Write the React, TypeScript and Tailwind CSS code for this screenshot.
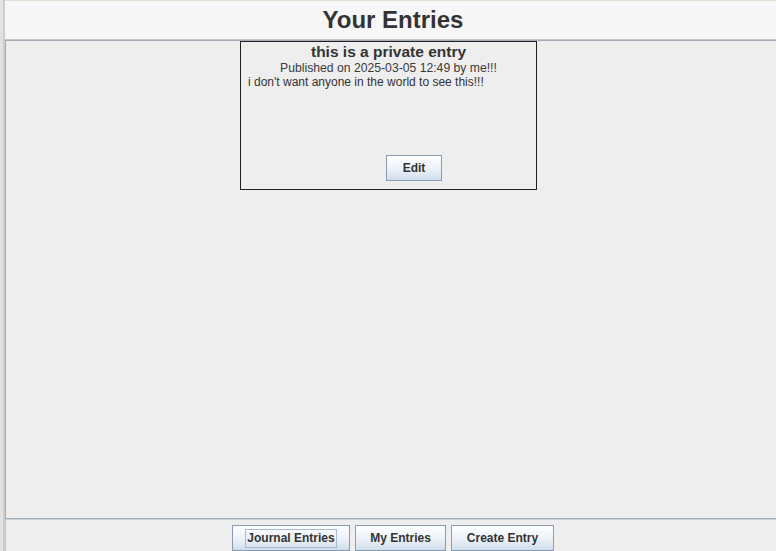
const font = { fontFamily: '"Liberation Sans", Arial, sans-serif' };

const btn =
  "h-[26px] border border-[#8a9bad] bg-gradient-to-b from-[#fdfeff] via-[#eef3f8] to-[#cfdeec] text-[12px] font-bold text-[#333333] flex items-center justify-center";

const EntryCard = () => {
  return (
    <div className="w-[297px] h-[149px] border border-[#222222] flex flex-col pt-[1px]">
      <p className="text-center text-[15.5px] leading-[18px] font-bold text-[#333333]">
        this is a private entry
      </p>
      <p className="text-center text-[12.2px] leading-[14px] text-[#3a3a3a]">
        Published on 2025-03-05 12:49 by me!!!
      </p>
      <p className="pl-[7px] text-[12px] leading-[14px] text-[#333333]">
        i don't want anyone in the world to see this!!!
      </p>
      <div className="mt-auto mb-[8px] ml-[145px]">
        <button className={`${btn} w-[56px]`}>Edit</button>
      </div>
    </div>
  );
};

export default function App() {
  return (
    <div className="w-[776px] h-[551px] overflow-hidden flex bg-[#eeeeee]" style={font}>
      {/* left strip from window behind */}
      <div className="w-[5px] h-full flex">
        <div className="w-[3px] h-full bg-[#e2e2e2]" />
        <div className="w-[2px] h-full bg-[#cdcdcd]" />
      </div>

      <div className="flex-1 flex flex-col min-w-0">
        <div className="h-[1px] bg-[#e6dcd2]" />
        {/* header */}
        <div className="h-[39px] bg-[#f7f7f7] border-b border-[#c4c7ca] flex items-center justify-center pl-[5px]">
          <h1 className="text-[24px] font-bold text-[#333333] leading-[28px]">Your Entries</h1>
        </div>

        {/* entries list */}
        <div className="h-[479px] border-t border-b border-l border-[#a2adb8] bg-[#eeeeee]">
          <div className="ml-[234px]">
            <EntryCard />
          </div>
        </div>

        {/* bottom nav */}
        <div className="flex-1 border-t border-[#c9d1d9] border-l border-l-[#c2c6ca] flex items-start justify-center gap-[5px] pt-[5px] pl-[4px]">
          <button className={`${btn} w-[118px] shrink-0`}>
            <span className="border border-[#a8bccf] px-[1px] leading-[17px]">Journal Entries</span>
          </button>
          <button className={`${btn} w-[91px] shrink-0`}>My Entries</button>
          <button className={`${btn} w-[103px] shrink-0`}>Create Entry</button>
        </div>
      </div>
    </div>
  );
}
